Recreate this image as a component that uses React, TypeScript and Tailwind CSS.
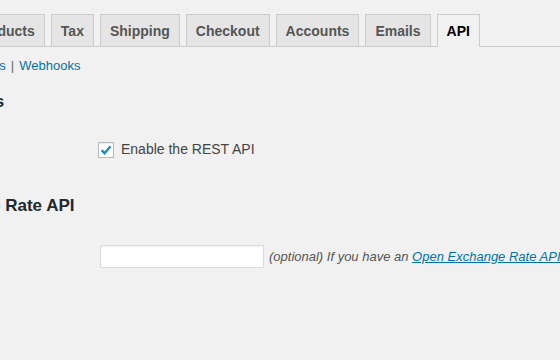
import React from 'react';

const tabs = ['General', 'Products', 'Tax', 'Shipping', 'Checkout', 'Accounts', 'Emails', 'API'];

const App: React.FC = () => {
  const active = 'API';

  return (
    <div className="w-[560px] h-[360px] overflow-hidden bg-[#f1f1f1] font-['Liberation_Sans',Arial,sans-serif] text-[#444]">
      <div className="ml-[-121px] w-[900px]">
        {/* tabs */}
        <div className="flex items-end gap-[6px] pt-[14px] pl-[7px] border-b border-[#ccc] h-[47px]">
          {tabs.map((tab) => (
            <div
              key={tab}
              className={
                tab === active
                  ? 'h-[33px] mb-[-1px] px-[9px] pt-[1px] flex items-center border border-b-0 border-[#ccc] bg-[#f1f1f1] text-[14px] font-bold text-black'
                  : 'h-[32px] px-[9px] pt-[2px] flex items-center border border-b-0 border-[#ccc] bg-[#e5e5e5] text-[14px] font-bold text-[#555]'
              }
            >
              {tab}
            </div>
          ))}
        </div>

        {/* sub links */}
        <div className="mt-[10px] flex items-center text-[13px] leading-[18px]">
          <span className="font-bold text-black">Settings</span>
          <span className="mx-[5px] text-[#666]">|</span>
          <span className="text-[#0073aa]">Keys/Apps</span>
          <span className="mx-[5px] text-[#666]">|</span>
          <span className="text-[#0073aa]">Webhooks</span>
        </div>

        <h2 className="mt-[16px] ml-[-7px] text-[17px] leading-[22px] font-bold text-[#23282d]">General Options</h2>

        <div className="mt-[26px] flex items-center">
          <div className="w-[219px]" />
          <div className="flex items-center gap-[7px]">
            <div className="w-[16px] h-[16px] bg-white border border-[#b4b9be] shadow-[inset_0_1px_2px_rgba(0,0,0,0.1)] flex items-center justify-center">
              <svg width="14" height="14" viewBox="0 0 14 14">
                <path d="M2.5 7.2 L5.6 10.2 L11.5 3.2" fill="none" stroke="#1e8cbe" strokeWidth="2.4" />
              </svg>
            </div>
            <span className="text-[14px] text-[#444]">Enable the REST API</span>
          </div>
        </div>

        <h2 className="mt-[35px] ml-[-7px] text-[17px] leading-[22px] font-bold text-[#23282d]">Open Exchange Rate API</h2>

        <div className="mt-[28px] flex items-center">
          <div className="w-[221px]" />
          <div className="w-[164px] h-[23px] bg-white border border-[#ddd] shadow-[inset_0_1px_2px_rgba(0,0,0,0.07)]" />
          <span className="ml-[5px] text-[13px] italic text-[#555] whitespace-nowrap">
            (optional) If you have an{' '}
            <span className="text-[#0073aa] underline">Open Exchange Rate API</span> id, enter it here.
          </span>
        </div>
      </div>
    </div>
  );
};

export default App;
